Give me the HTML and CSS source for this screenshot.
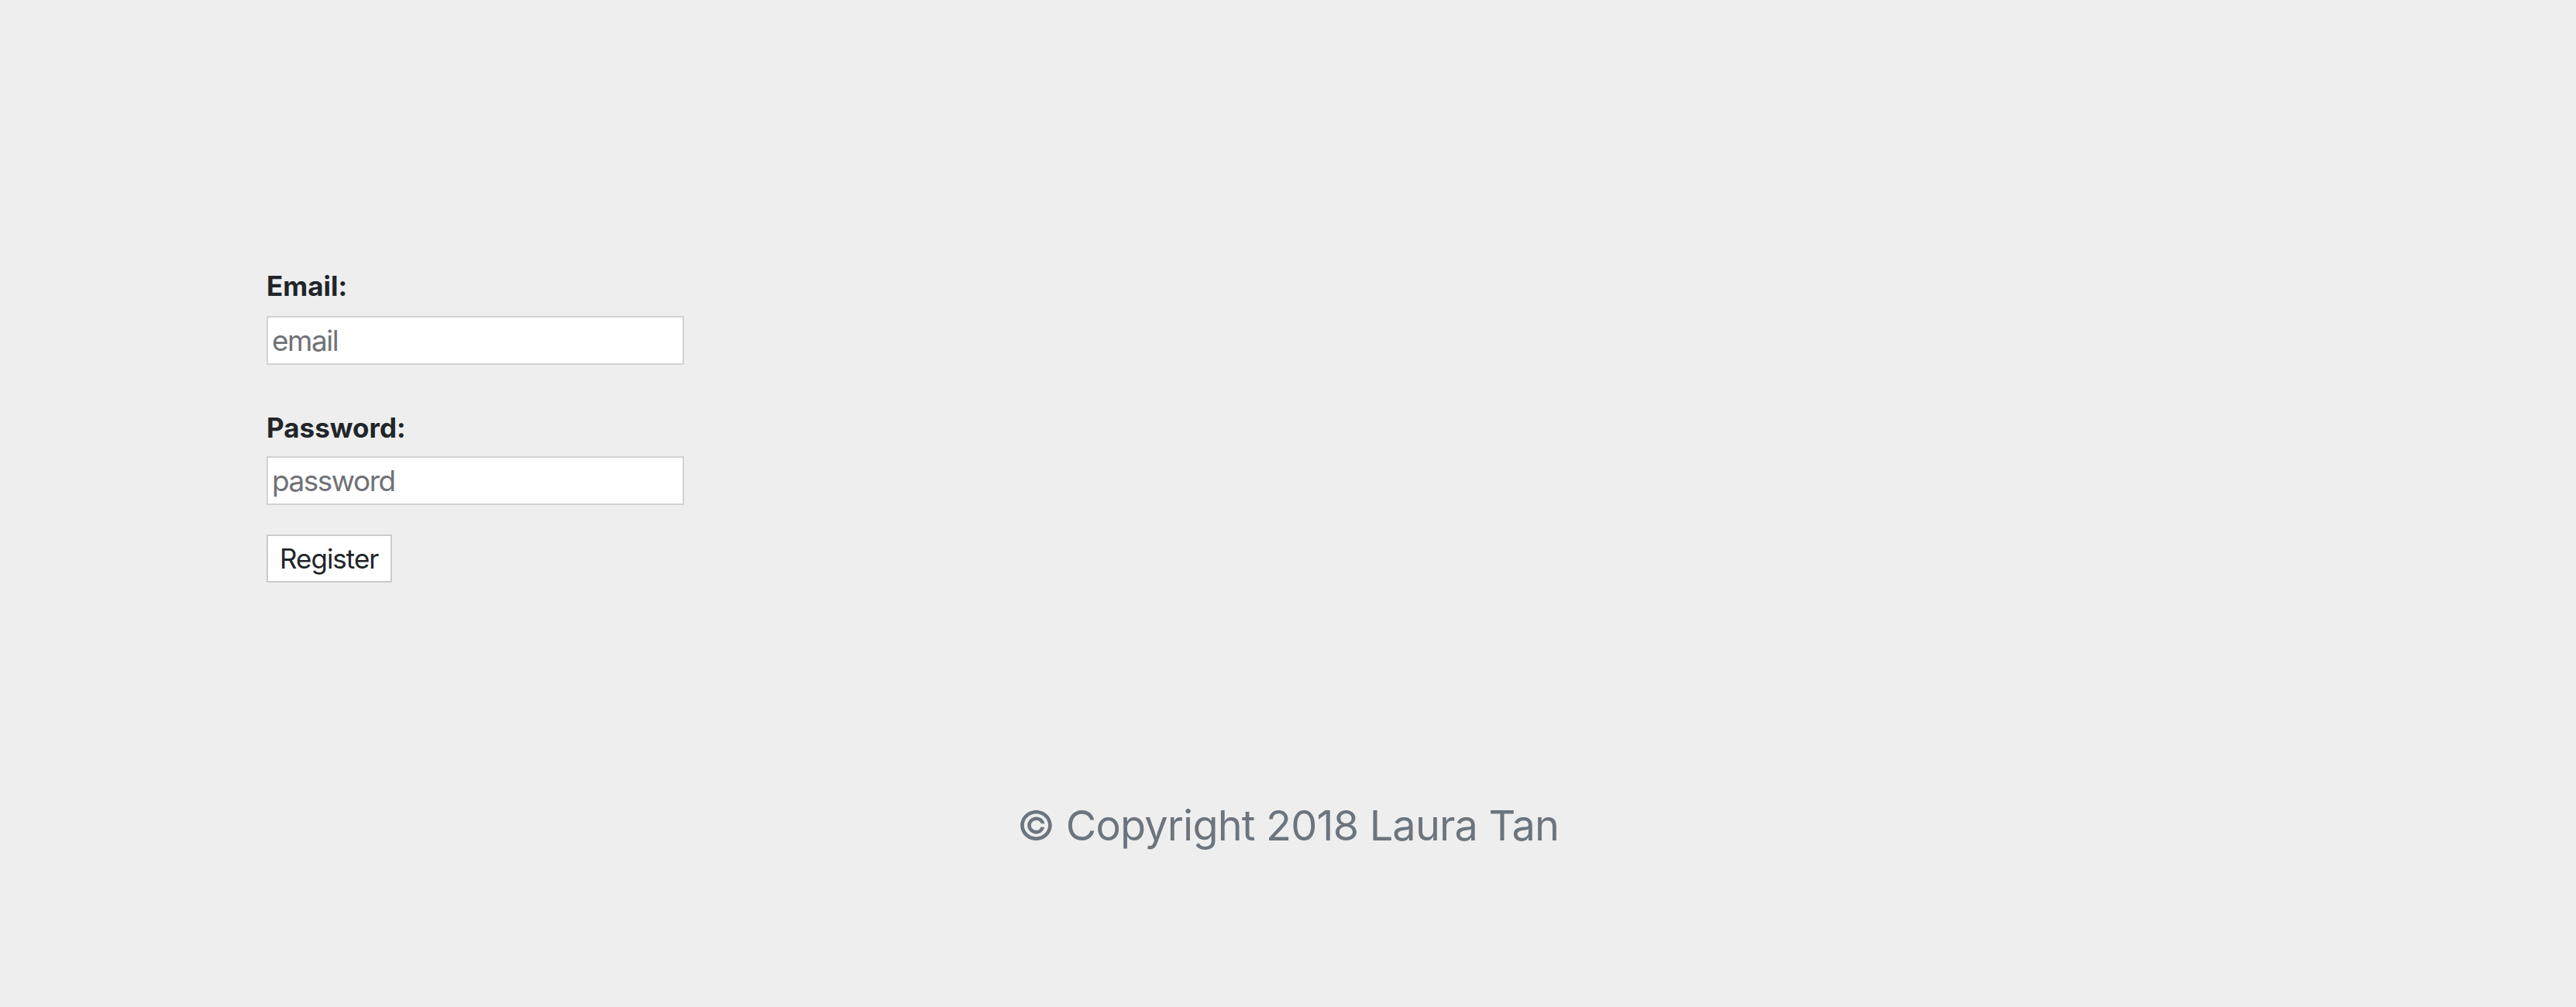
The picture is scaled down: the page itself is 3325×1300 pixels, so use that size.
FILE: index.html
```html
<!DOCTYPE html>
<html>
<head>
<meta charset="utf-8">
<link rel="stylesheet" href="styles.css">
</head>
<body>
<main class="page">
  <form class="form">
    <div class="field">
      <label class="label" for="email">Email:</label>
      <input class="input" id="email" type="text" placeholder="email">
    </div>
    <div class="field field-next">
      <label class="label" for="password">Password:</label>
      <input class="input" id="password" type="password" placeholder="password">
    </div>
    <button class="btn" type="button">Register</button>
  </form>
  <footer class="footer">© Copyright 2018 Laura Tan</footer>
</main>
</body>
</html>
```
FILE: styles.css
```css
html, body {
  margin: 0;
  padding: 0;
  background: #eeeeee;
}
body {
  font-family: Inter, "Noto Sans", sans-serif;
  color: #212529;
}
.page {
  display: flex;
  flex-direction: column;
  min-height: 1300px;
}
.form {
  display: flex;
  flex-direction: column;
  align-items: flex-start;
  padding: 348px 0 0 344px;
}
.field {
  display: flex;
  flex-direction: column;
  align-items: flex-start;
}
.field-next {
  margin-top: 60px;
}
.label {
  font-size: 35px;
  font-weight: 700;
  line-height: 42px;
  margin-bottom: 18px;
}
.field-next .label {
  margin-bottom: 16px;
}
.input {
  box-sizing: border-box;
  width: 539px;
  height: 63px;
  margin: 0;
  padding: 0 5px;
  border: 2px solid #d2d2d2;
  background: #ffffff;
  font-family: Inter, "Noto Sans", sans-serif;
  font-size: 37px;
  letter-spacing: -1.5px;
  color: #212529;
  outline: none;
}
.input::placeholder {
  color: #6f7276;
  opacity: 1;
}
.btn {
  box-sizing: border-box;
  height: 62px;
  margin: 38px 0 0 0;
  padding: 0 15px;
  border: 2px solid #cbcbcb;
  border-radius: 0;
  background: #ffffff;
  font-family: Inter, "Noto Sans", sans-serif;
  font-size: 35px;
  letter-spacing: -1px;
  color: #212529;
}
.footer {
  margin-top: 282px;
  text-align: center;
  font-size: 54px;
  line-height: 64px;
  letter-spacing: -0.8px;
  color: #6c757d;
}
```
